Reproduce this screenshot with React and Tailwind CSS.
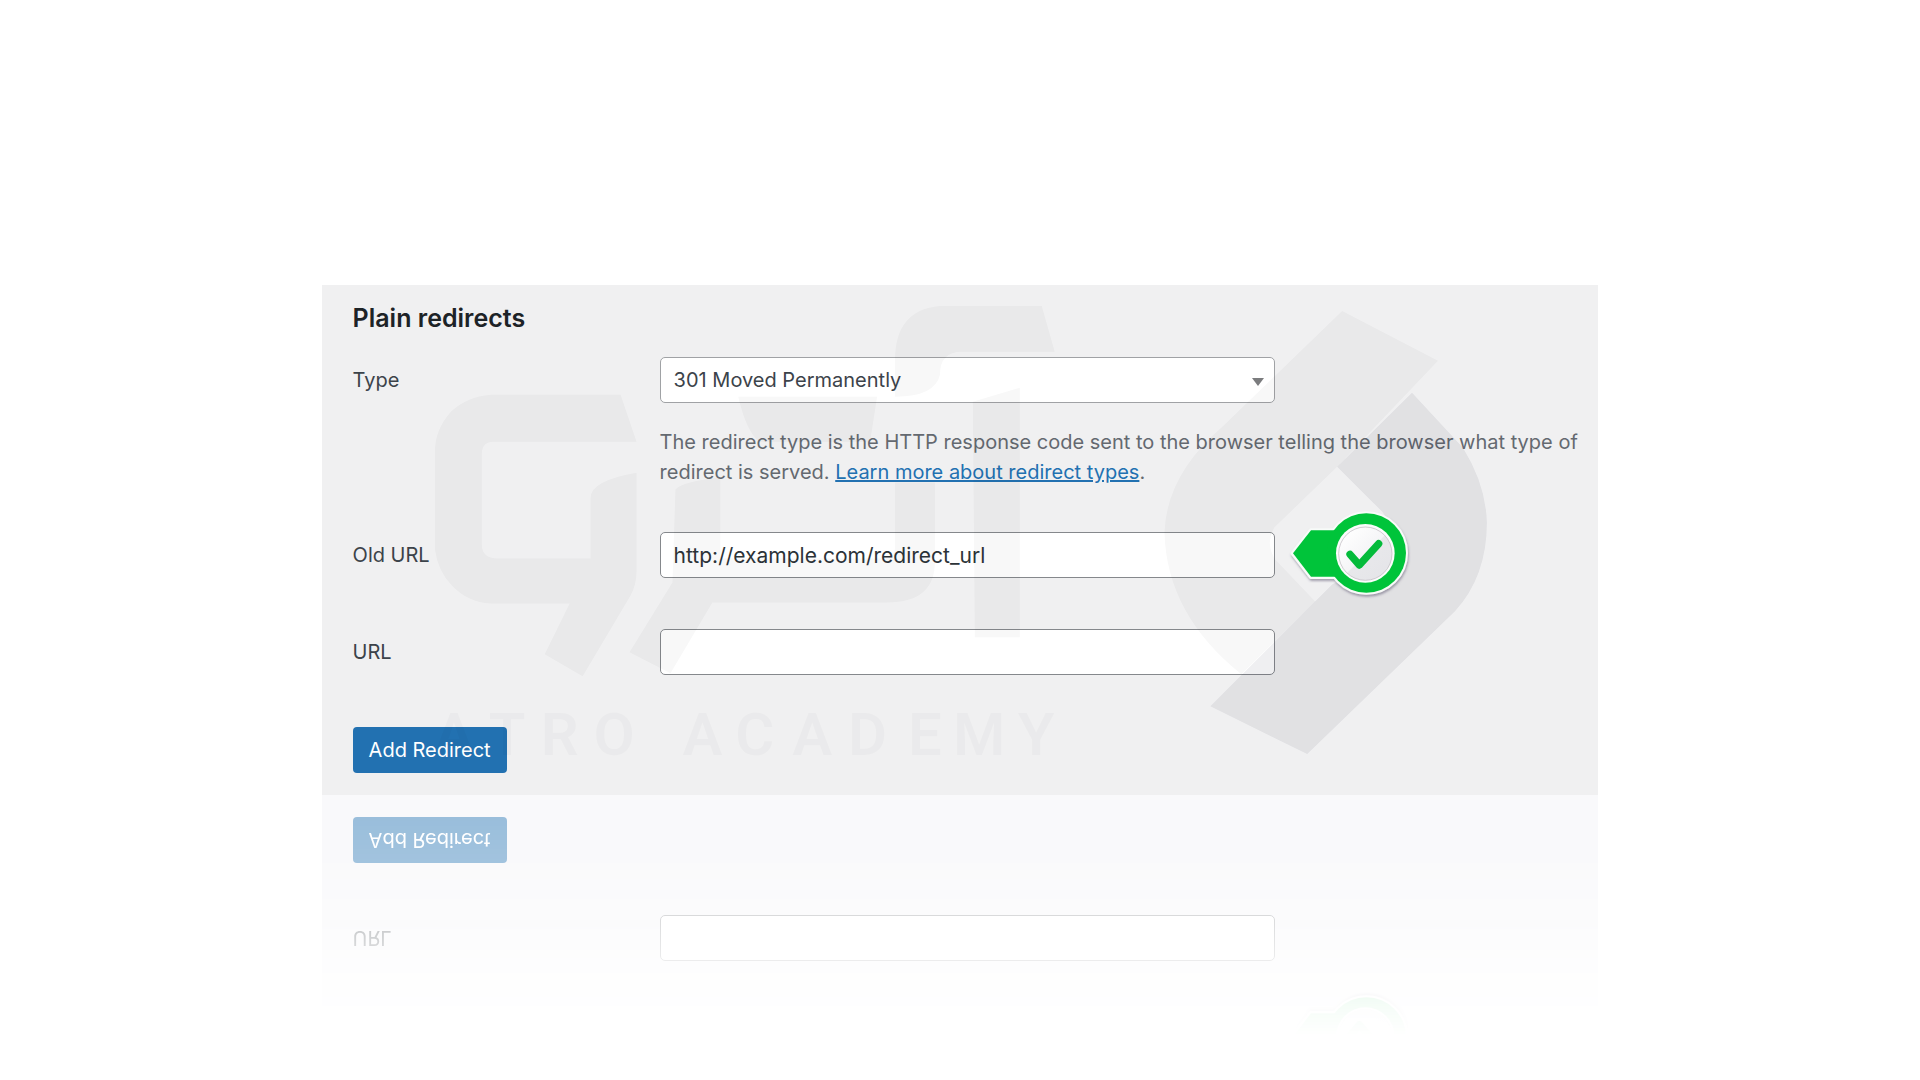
const fieldClass =
  'block h-[46px] w-[615px] max-w-full rounded-[5px] border bg-white pl-[13px]'

const Watermark = () => (
  <svg
    viewBox="322 285 1277 511"
    className="pointer-events-none absolute inset-0 h-full w-full"
    aria-hidden="true"
  >
    <g fill="#14142a" fillOpacity="0.03">
      <path d="M620 395 H490 Q466 397 450 412 Q434 430 434 452 V550 Q437 572 451 586 Q467 603 490 604 H569 L544 655 L582 677 L630 596 Q636 585 636 572 V473 Q590 481 590 498 V559 H497 Q481 559 481 545 V454 Q481 442 493 442 H636 Z" />
      <path d="M738 397 H877 L870 442 H759 Q746 432 738 397 Z" />
      <path d="M675 490 Q682 482 720 478 V559 H883 Q895 559 895 548 V483 H935 V562 Q935 603 887 603 H712 L670 674 L629 653 L672 583 Z" />
      <path d="M1042 306 H940 Q895 310 895 360 V397 Q935 397 940 375 Q940 352 962 352 H1055 Z" />
      <path d="M973 402 L1020 388 V638 H975 Z" />
      <path d="M1343 311 L1439 361 L1338 467 L1275 528 Q1266 543 1275 559 L1316 602 L1242 675 Q1167 615 1165 533 Q1167 475 1223 427 Z" />
    </g>
    <path
      d="M1413 393 L1338 467 L1383 512 Q1402 535 1383 556 L1333 585 L1211 707 L1308 755 L1456 612 Q1488 577 1488 523 Q1487 485 1464 448 Z"
      fill="#14142a"
      fillOpacity="0.065"
    />
    <text
      x="433 488 540 593 640 682 735 792 848 908 953 1018"
      y="756"
      fontFamily="Roboto, sans-serif"
      fontSize="60"
      fontWeight="600"
      fill="#14142a"
      fillOpacity="0.022"
    >
      ATRO ACADEMY
    </text>
  </svg>
)

const CheckBadge = () => (
  <svg
    viewBox="0 0 420 330"
    className="relative z-10 -my-8 ml-1 h-[110px] w-[140px] shrink-0"
    aria-hidden="true"
  >
    <defs>
      <linearGradient id="disc" x1="0" y1="0" x2="1" y2="1">
        <stop offset="0.1" stopColor="#ffffff" />
        <stop offset="0.5" stopColor="#f5f5f7" />
        <stop offset="0.52" stopColor="#e8e8eb" />
        <stop offset="1" stopColor="#e4e4e8" />
      </linearGradient>
      <filter id="shade" x="-10%" y="-10%" width="120%" height="125%">
        <feDropShadow dx="2" dy="6" stdDeviation="3" floodColor="#55506a" floodOpacity="0.5" />
      </filter>
    </defs>
    <g fill="#f8fbf9" stroke="#f8fbf9" strokeWidth="14" strokeLinejoin="round" filter="url(#shade)">
      <path d="M42 160 L96 92 H200 V230 H96 Z" />
      <circle cx="262" cy="159" r="118" />
    </g>
    <path d="M42 160 L96 91 H200 V230 H96 Z" fill="#00c43a" />
    <circle cx="262" cy="159" r="119" fill="#00c43a" />
    <circle cx="259" cy="160" r="88" fill="#fafcfb" />
    <circle cx="259" cy="161" r="80" fill="url(#disc)" stroke="#b9b4bb" strokeWidth="2" />
    <path
      d="M213 163 L241 195 L299 131"
      fill="none"
      stroke="#04bb3b"
      strokeWidth="22"
      strokeLinecap="round"
      strokeLinejoin="round"
    />
  </svg>
)

const Row = ({ id, label, className, children }) => (
  <div className={`grid grid-cols-[307px_1fr] ${className}`}>
    <label htmlFor={id} className="flex h-[46px] items-center text-[#3c434a]">
      {label}
    </label>
    <div className="min-w-0">{children}</div>
  </div>
)

const TargetRow = ({ id }) => (
  <Row id={id} label="URL" className="mt-[51px]">
    <input id={id} type="text" className={`${fieldClass} border-[#85888c] text-[21px]`} />
  </Row>
)

const SubmitButton = () => (
  <button
    type="submit"
    className="mt-[52px] block h-[46px] rounded-[4px] bg-[#2271b1] px-4 text-white"
  >
    Add Redirect
  </button>
)

const RedirectForm = () => (
  <form className="bg-[#f0f0f1] pt-4 pr-4 pb-[22px] pl-[31px]" onSubmit={(e) => e.preventDefault()}>
    <h2 className="text-[25px] leading-[34px] font-semibold text-[#1d2327]">Plain redirects</h2>

    <Row id="redirect-type" label="Type" className="mt-[22px]">
      <div className="relative w-[615px] max-w-full">
        <select
          id="redirect-type"
          className={`${fieldClass} appearance-none border-[#a0a2a5] pr-10 text-[#3c434a]`}
        >
          <option>301 Moved Permanently</option>
        </select>
        <svg
          viewBox="0 0 12 8"
          className="pointer-events-none absolute top-[21px] right-[11px] h-2 w-3"
          aria-hidden="true"
        >
          <path d="M0 0 H12 L6 8 Z" fill="#7b7c7e" />
        </svg>
      </div>
      <p className="mt-6 leading-[30px] text-[#646970]">
        The redirect type is the HTTP response code sent to the browser telling the browser what
        type of redirect is served.{' '}
        <a href="#redirect-types" className="text-[#2271b1] underline">
          Learn more about redirect types
        </a>
        .
      </p>
    </Row>

    <Row id="redirect-old" label="Old URL" className="mt-[45px]">
      <div className="flex items-center">
        <input
          id="redirect-old"
          type="text"
          defaultValue="http://example.com/redirect_url"
          className={`${fieldClass} border-[#85888c] text-[21px] text-[#2c3338]`}
        />
        <CheckBadge />
      </div>
    </Row>

    <TargetRow id="redirect-url" />
    <SubmitButton />
  </form>
)

// Lower part of the form, flipped and fading out under the panel
const Reflection = () => (
  <div
    aria-hidden="true"
    inert
    className="[mask-image:linear-gradient(to_bottom,rgba(0,0,0,0.48),rgba(0,0,0,0.42)_25%,rgba(0,0,0,0.3)_44%,rgba(0,0,0,0.12)_62%,rgba(0,0,0,0.04)_74%,transparent_85%)]"
  >
    <div className="-scale-y-100 bg-[#f2f2f6] pt-5 pb-[22px] pl-[31px]">
      <div className="flex h-[46px] items-center pl-[307px]">
        <div className="w-[615px]" />
        <CheckBadge />
      </div>
      <TargetRow id="mirror-url" />
      <SubmitButton />
    </div>
  </div>
)

export default function App() {
  return (
    <main className="min-h-screen bg-white pt-[285px] font-['Inter',sans-serif] text-[20px]">
      <div className="mx-auto w-[66.5%]">
        <section className="relative">
          <RedirectForm />
          <Watermark />
        </section>
        <Reflection />
      </div>
    </main>
  )
}
